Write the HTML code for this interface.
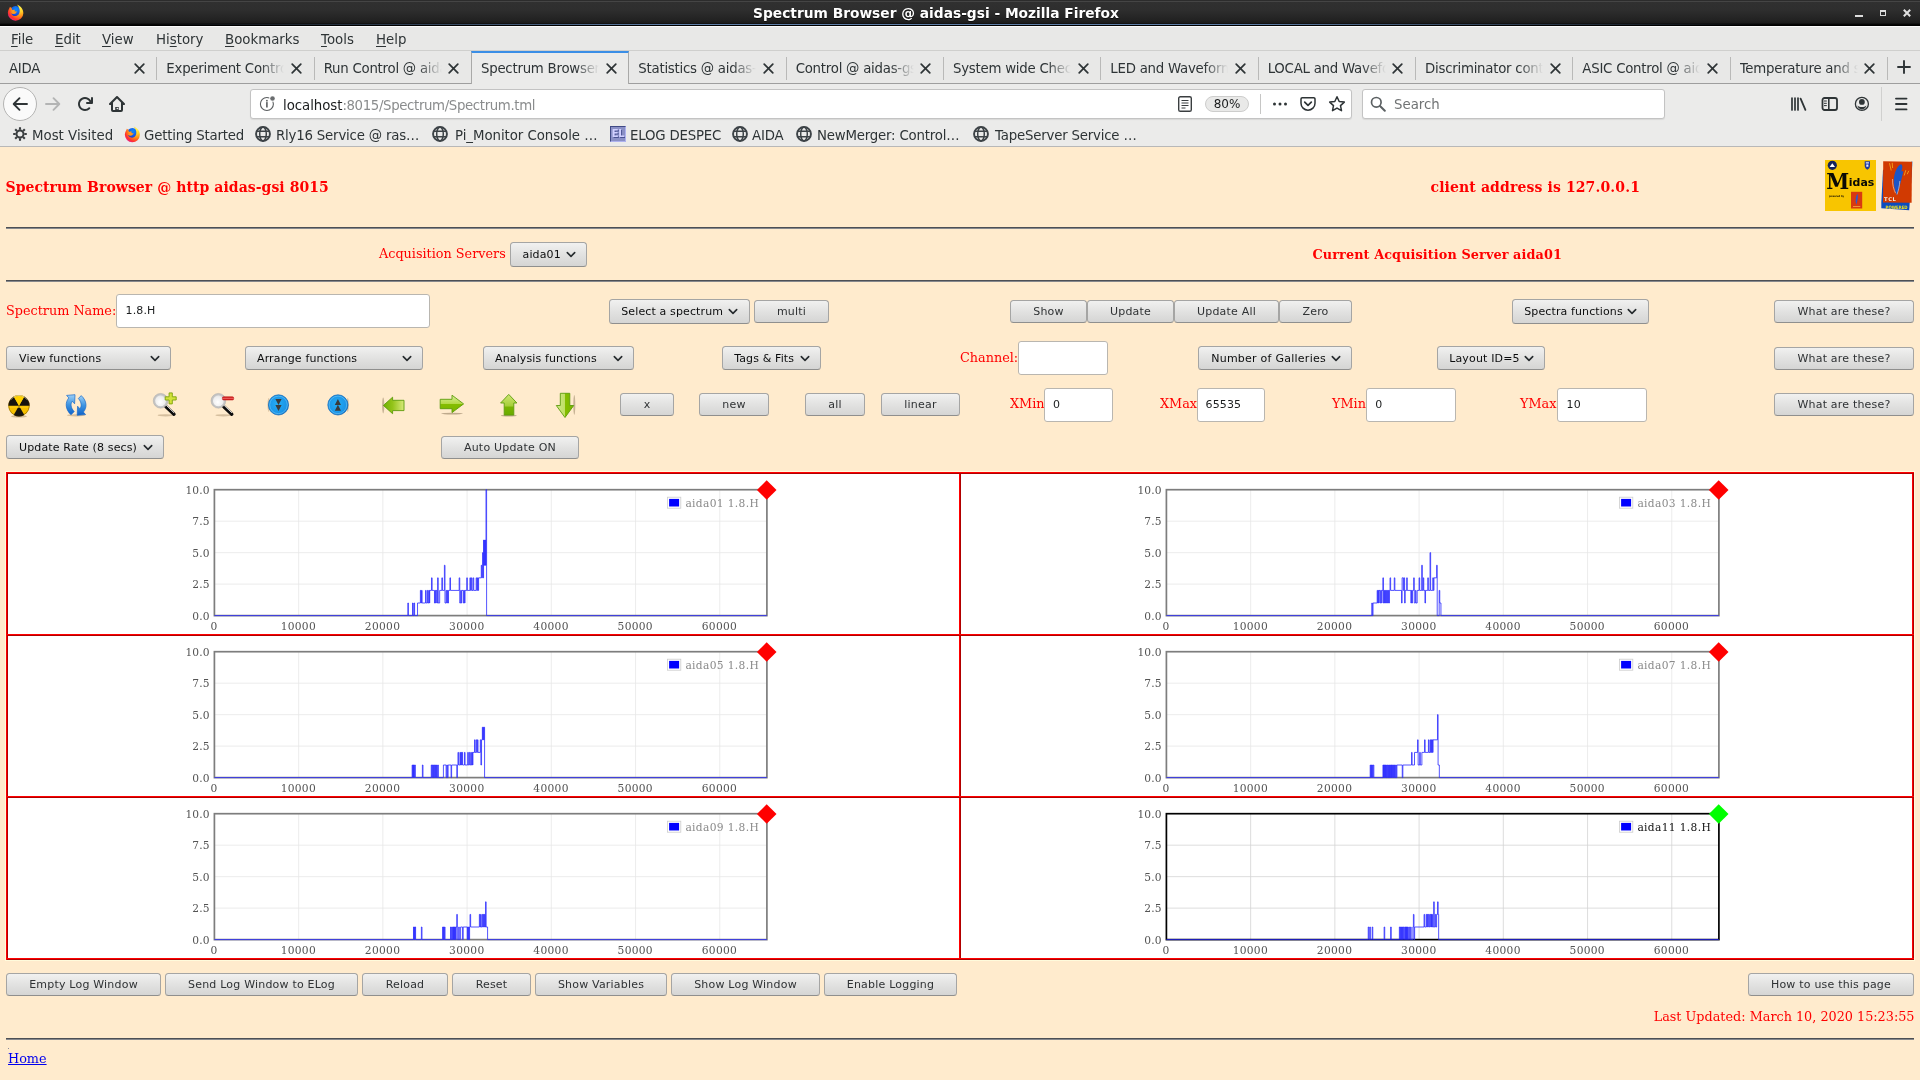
<!DOCTYPE html>
<html lang="en">
<head>
<meta charset="utf-8">
<title>Spectrum Browser @ aidas-gsi</title>
<style>
*{box-sizing:border-box;margin:0;padding:0}
html,body{width:1920px;height:1080px;overflow:hidden;background:#ffebcd}
body{position:relative;font-family:"DejaVu Sans","Liberation Sans",sans-serif;font-size:13.33px;color:#2e3436}
.abs{position:absolute}
/* ---------- window title bar ---------- */
#titlebar{left:0;top:0;width:1920px;height:26px;background:linear-gradient(#2c2c2c 0,#2c2c2c 1px,#454545 1px,#454545 2px,#303030 2px,#2e2e2e 10px,#222 20px,#1b1b1b 23px,#0a0a0a 24px,#000 25px,#000 26px)}
#titletext{left:0;top:0;width:1872px;height:26px;line-height:26px;text-align:center;color:#fff;font-weight:bold;font-size:13.770px;white-space:nowrap;text-shadow:0 1px 0 rgba(0,0,0,.6)}
/* ---------- menubar ---------- */
#menubar{left:0;top:26px;width:1920px;height:25px;background:#e8e8e7;border-top:1px solid #fbfbfb;border-bottom:1px solid #cfcfcd}
#menubar span{position:absolute;top:0;line-height:25px;white-space:nowrap}
#menubar u{text-decoration:underline;text-underline-offset:2px;text-decoration-thickness:1px}
/* ---------- tab bar ---------- */
#tabbar{left:0;top:51px;width:1920px;height:33px;background:#e8e8e7;border-bottom:1px solid #9e9e9e}
.tab{position:absolute;top:0;height:32px;width:158px;line-height:35.500px;letter-spacing:-.25px;margin-left:-1px;padding-left:9px;white-space:nowrap;overflow:hidden}
.tab .lbl{position:absolute;left:10px;top:0;width:118px;overflow:hidden;white-space:nowrap;-webkit-mask-image:linear-gradient(to right,#000 80%,transparent 100%);mask-image:linear-gradient(to right,#000 80%,transparent 100%)}
.tab .sep{position:absolute;left:0;top:6px;width:1px;height:23px;background:#b9b9b8}
.tab svg{position:absolute;left:134.500px;top:11.500px}
.tab.act{background:#ebebea;top:0;height:33px;border-left:1px solid #a9a9a8;border-right:1px solid #a9a9a8;border-top:2px solid #3a8ee6}
.tab.act .lbl{top:-2px;left:9px}
.tab.act svg{top:9.500px;left:133.500px}
/* ---------- nav bar ---------- */
#navbar{left:0;top:84px;width:1920px;height:38px;background:#ebebea}
#bookbar{left:0;top:122px;width:1920px;height:25px;background:#ebebea;border-bottom:1px solid #b8b8b8}
#bookbar span{position:absolute;top:0;line-height:27.500px;white-space:nowrap;letter-spacing:-.2px}
.field{position:absolute;background:#fff;border:1px solid #c3c3c3;border-radius:3px;box-shadow:0 1px 1px rgba(0,0,0,.08)}

/* ---------- page ---------- */
.lab{position:absolute;font-family:"DejaVu Serif","Liberation Serif",serif;font-size:12.8px;color:#ff0000;white-space:nowrap;line-height:16px}
.hd{position:absolute;font-family:"DejaVu Serif","Liberation Serif",serif;font-weight:bold;color:#ff0000;white-space:nowrap;line-height:18px;letter-spacing:.06px}
.hr{position:absolute;height:2px;background:#4d4f54;border-bottom:1px solid #86888c}
.btn{position:absolute;height:23px;border:1px solid #a5a5a4;border-bottom-color:#8f8f8e;border-radius:3.500px;background:linear-gradient(#f1f1f0,#e2e2e1 50%,#d5d5d4);font-size:11px;letter-spacing:.2px;color:#2f3234;text-align:center;line-height:21px;white-space:nowrap}
.sel{position:absolute;height:25px;border:1px solid #a5a5a4;border-bottom-color:#8f8f8e;border-radius:3.500px;background:linear-gradient(#f1f1f0,#e2e2e1 50%,#d5d5d4);font-size:11px;letter-spacing:.13px;color:#0c0d0e;line-height:23px;padding-left:11px;white-space:nowrap}
.sel svg{position:absolute;top:8px}
.inp{position:absolute;height:34px;background:#fff;border:1px solid #b9b6b0;border-radius:3px;font-size:11px;letter-spacing:.15px;color:#1b1d1e;line-height:32px;padding-left:8px;white-space:nowrap}
.grid{position:absolute;left:6px;top:472px;width:1908px;height:488px;background:#fff;border:2px solid #e00000}
.tk{font-family:"DejaVu Serif","Liberation Serif",serif;font-size:10.670px;fill:#545454}
</style>
</head>
<body>
<div id="root" style="position:absolute;left:0;top:0;width:1920px;height:1080px;will-change:transform">
<div id="titlebar" class="abs"></div>
<div class="abs" style="left:0;top:24px;width:1920px;height:1px;background:linear-gradient(to right,rgba(93,126,168,0) 0,rgba(93,126,168,0) 8%,#5f7fa8 35%,#5f7fa8 65%,rgba(93,126,168,0) 92%)"></div>
<svg class="abs" style="left:6.6px;top:4.4px" width="17" height="17" viewBox="0 0 16 16"><defs><radialGradient id="fg2" cx="0.780" cy="0.150" r="1.050"><stop offset="0" stop-color="#fff44f"/><stop offset="0.300" stop-color="#ffd02a"/><stop offset="0.550" stop-color="#ff8a16"/><stop offset="0.780" stop-color="#ff3030"/><stop offset="1" stop-color="#d71fc0"/></radialGradient><radialGradient id="fb2" cx="0.550" cy="0.300" r="0.750"><stop offset="0" stop-color="#0a8cff"/><stop offset="0.600" stop-color="#1a55e0"/><stop offset="1" stop-color="#2a14a8"/></radialGradient></defs><circle cx="8.100" cy="7.200" r="5.300" fill="url(#fb2)"/><path d="M2.800 2.700C2.300 4.200 1 5.600.8 8.300A7.300 7.300 0 0 0 15.400 8.600C15.400 5 13.200 2 9.400.4C10.400 2.200 11.700 3.400 11.900 5.600C12.200 9 10.400 11.300 7.800 11.300C5.600 11.300 4.300 10 4.100 8.600C5 9.200 6 9.300 6.900 8.900C5.600 8.300 5 7.200 5.300 6C4.600 5.400 4.200 4.400 4.400 3.600C3.800 3.500 3.200 3.200 2.800 2.700Z" fill="url(#fg2)"/><path d="M4.300 6.200C5.400 5.300 6.700 5.200 7.800 5.700C7.300 6 7 6.400 6.900 6.900C7.700 7.100 8.700 7.100 9.400 6.800C9.100 8.300 7.900 9.300 6.400 9.300C5.200 9.300 4.300 8.700 4 7.800C4.400 8 4.900 8 5.300 7.800C4.700 7.400 4.300 6.900 4.300 6.200Z" fill="#ff9a1f"/></svg>
<div class="abs" style="left:1855px;top:15px;width:8px;height:2px;background:#dcdcdc"></div>
<div class="abs" style="left:1880px;top:10px;width:6px;height:6px;border:1px solid #dcdcdc;border-top-width:2px"></div>
<svg class="abs" style="left:1903px;top:9px" width="8" height="8" viewBox="0 0 8 8"><path d="M.8 .8L7.200 7.200M7.200 .8L.8 7.200" stroke="#e0e0e0" stroke-width="2"/></svg>
<div id="titletext" class="abs">Spectrum Browser @ aidas-gsi - Mozilla Firefox</div>
<div id="menubar" class="abs">
<span style="left:11px"><u>F</u>ile</span>
<span style="left:55px"><u>E</u>dit</span>
<span style="left:102px"><u>V</u>iew</span>
<span style="left:156px">Hi<u>s</u>tory</span>
<span style="left:225px"><u>B</u>ookmarks</span>
<span style="left:321px"><u>T</u>ools</span>
<span style="left:376px"><u>H</u>elp</span>
</div>
<div id="tabbar" class="abs">
<div class="tab" style="left:0.0px"><span class="lbl">AIDA</span><svg width="11" height="11" viewBox="0 0 11 11"><path d="M1.200 1.200L9.800 9.800M9.800 1.200L1.200 9.800" stroke="#2e3436" stroke-width="1.700" fill="none" stroke-linecap="round"/></svg></div>
<div class="tab" style="left:157.33px"><i class="sep"></i><span class="lbl">Experiment Control @ aidas-gsi</span><svg width="11" height="11" viewBox="0 0 11 11"><path d="M1.200 1.200L9.800 9.800M9.800 1.200L1.200 9.800" stroke="#2e3436" stroke-width="1.700" fill="none" stroke-linecap="round"/></svg></div>
<div class="tab" style="left:314.67px"><i class="sep"></i><span class="lbl">Run Control @ aidas-gsi</span><svg width="11" height="11" viewBox="0 0 11 11"><path d="M1.200 1.200L9.800 9.800M9.800 1.200L1.200 9.800" stroke="#2e3436" stroke-width="1.700" fill="none" stroke-linecap="round"/></svg></div>
<div class="tab act" style="left:472.0px"><span class="lbl">Spectrum Browser @ aidas-gsi</span><svg width="11" height="11" viewBox="0 0 11 11"><path d="M1.200 1.200L9.800 9.800M9.800 1.200L1.200 9.800" stroke="#2e3436" stroke-width="1.700" fill="none" stroke-linecap="round"/></svg></div>
<div class="tab" style="left:629.33px"><span class="lbl">Statistics @ aidas-gsi</span><svg width="11" height="11" viewBox="0 0 11 11"><path d="M1.200 1.200L9.800 9.800M9.800 1.200L1.200 9.800" stroke="#2e3436" stroke-width="1.700" fill="none" stroke-linecap="round"/></svg></div>
<div class="tab" style="left:786.67px"><i class="sep"></i><span class="lbl">Control @ aidas-gsi</span><svg width="11" height="11" viewBox="0 0 11 11"><path d="M1.200 1.200L9.800 9.800M9.800 1.200L1.200 9.800" stroke="#2e3436" stroke-width="1.700" fill="none" stroke-linecap="round"/></svg></div>
<div class="tab" style="left:944.0px"><i class="sep"></i><span class="lbl">System wide Checks @ aidas-gsi</span><svg width="11" height="11" viewBox="0 0 11 11"><path d="M1.200 1.200L9.800 9.800M9.800 1.200L1.200 9.800" stroke="#2e3436" stroke-width="1.700" fill="none" stroke-linecap="round"/></svg></div>
<div class="tab" style="left:1101.33px"><i class="sep"></i><span class="lbl">LED and Waveform @ aidas-gsi</span><svg width="11" height="11" viewBox="0 0 11 11"><path d="M1.200 1.200L9.800 9.800M9.800 1.200L1.200 9.800" stroke="#2e3436" stroke-width="1.700" fill="none" stroke-linecap="round"/></svg></div>
<div class="tab" style="left:1258.67px"><i class="sep"></i><span class="lbl">LOCAL and Waveform @ aidas-gsi</span><svg width="11" height="11" viewBox="0 0 11 11"><path d="M1.200 1.200L9.800 9.800M9.800 1.200L1.200 9.800" stroke="#2e3436" stroke-width="1.700" fill="none" stroke-linecap="round"/></svg></div>
<div class="tab" style="left:1416.0px"><i class="sep"></i><span class="lbl">Discriminator control @ aidas-gsi</span><svg width="11" height="11" viewBox="0 0 11 11"><path d="M1.200 1.200L9.800 9.800M9.800 1.200L1.200 9.800" stroke="#2e3436" stroke-width="1.700" fill="none" stroke-linecap="round"/></svg></div>
<div class="tab" style="left:1573.33px"><i class="sep"></i><span class="lbl">ASIC Control @ aidas-gsi</span><svg width="11" height="11" viewBox="0 0 11 11"><path d="M1.200 1.200L9.800 9.800M9.800 1.200L1.200 9.800" stroke="#2e3436" stroke-width="1.700" fill="none" stroke-linecap="round"/></svg></div>
<div class="tab" style="left:1730.67px"><i class="sep"></i><span class="lbl">Temperature and status @ aidas-gsi</span><svg width="11" height="11" viewBox="0 0 11 11"><path d="M1.200 1.200L9.800 9.800M9.800 1.200L1.200 9.800" stroke="#2e3436" stroke-width="1.700" fill="none" stroke-linecap="round"/></svg></div>
<i class="sep" style="position:absolute;left:1887px;top:6px;width:1px;height:23px;background:#b9b9b8"></i><svg class="abs" style="left:1897px;top:9px" width="14" height="14" viewBox="0 0 14 14"><path d="M7 1V13M1 7H13" stroke="#2e3436" stroke-width="1.900" stroke-linecap="round"/></svg>
</div>
<div id="navbar" class="abs">
<div class="abs" style="left:3px;top:3px;width:34px;height:34px;border-radius:50%;background:#fafafa;border:1px solid #b4b4b3"></div>
<svg class="abs" style="left:12px;top:12px" width="16" height="16" viewBox="0 0 16 16"><path d="M15 8H2M7.5 2.2L1.7 8l5.8 5.8" stroke="#2e3436" stroke-width="1.9" fill="none" stroke-linecap="round" stroke-linejoin="round"/></svg>
<svg class="abs" style="left:45px;top:12px" width="16" height="16" viewBox="0 0 16 16"><path d="M1 8H14M8.5 2.2L14.3 8l-5.8 5.8" stroke="#b3b4b4" stroke-width="1.9" fill="none" stroke-linecap="round" stroke-linejoin="round"/></svg>
<svg class="abs" style="left:77px;top:12px" width="16" height="16" viewBox="0 0 16 16"><path d="M15 1a1 1 0 0 0-1 1v2.418A6.995 6.995 0 1 0 8 15a6.954 6.954 0 0 0 4.950-2.050 1 1 0 0 0-1.414-1.414A5.019 5.019 0 1 1 12.549 6H10a1 1 0 0 0 0 2h5a1 1 0 0 0 1-1V2a1 1 0 0 0-1-1z" fill="#2e3436"/></svg>
<svg class="abs" style="left:109px;top:12px" width="16" height="16" viewBox="0 0 16 16"><path d="M15.7 7.3l-7-7a1 1 0 0 0-1.4 0l-7 7A1 1 0 0 0 1 9h1v5a2 2 0 0 0 2 2h8a2 2 0 0 0 2-2V9h1a1 1 0 0 0 .7-1.700zM12 14H9.500v-3h-3v3H4V6.400l4-4 4 4z" fill="#2e3436"/><rect x="6.500" y="11" width="3" height="3" fill="#2e3436"/><rect x="7.600" y="11.800" width="1.600" height="1.400" fill="#ebebea"/></svg>
<div class="field" style="left:250px;top:5px;width:1102px;height:30px"></div>
<svg class="abs" style="left:258px;top:10px" width="20" height="20" viewBox="258 94 20 20"><circle cx="266.900" cy="104" r="6.500" fill="none" stroke="#5a5d5f" stroke-width="1.100"/><rect x="266.100" y="102.100" width="1.600" height="5.400" fill="#5a5d5f"/><rect x="266.100" y="99.900" width="1.600" height="1.600" fill="#5a5d5f"/><circle cx="272.500" cy="98.500" r="3.300" fill="#fff"/><circle cx="272.500" cy="98.500" r="2.300" fill="#6a6d6f"/></svg>
<span class="abs" style="left:283px;top:6px;line-height:31.500px;color:#8a8c8d;white-space:nowrap;letter-spacing:-.37px"><span style="color:#1a1c1d;letter-spacing:-.05px">localhost</span>:8015/Spectrum/Spectrum.tml</span>
<svg class="abs" style="left:1177px;top:12px" width="16" height="16" viewBox="0 0 16 16"><rect x="1.700" y="0.700" width="12.600" height="14.600" rx="1.600" fill="none" stroke="#3a3e40" stroke-width="1.400"/><path d="M4.500 4.500h7M4.500 7h7M4.500 9.500h7M4.500 12h4" stroke="#3a3e40" stroke-width="1"/></svg>
<div class="abs" style="left:1205px;top:12px;width:44px;height:16px;border-radius:8px;background:#e9e9e8;border:1px solid #cdcdcc;font-size:12px;line-height:14px;text-align:center;color:#1a1c1d">80%</div>
<div class="abs" style="left:1260px;top:10px;width:1px;height:20px;background:#c6c6c5"></div>
<svg class="abs" style="left:1272px;top:12px" width="16" height="16" viewBox="0 0 16 16"><circle cx="2.500" cy="8" r="1.500" fill="#2e3436"/><circle cx="8" cy="8" r="1.500" fill="#2e3436"/><circle cx="13.500" cy="8" r="1.500" fill="#2e3436"/></svg>
<svg class="abs" style="left:1300px;top:12px" width="16" height="16" viewBox="0 0 16 16"><path d="M2.200 1.700h11.600a1.200 1.200 0 0 1 1.200 1.200v4.300a7 7 0 0 1-14 0V2.900a1.200 1.200 0 0 1 1.200-1.200z" fill="none" stroke="#2e3436" stroke-width="1.500"/><path d="M4.700 6.200L8 9.300l3.300-3.100" fill="none" stroke="#2e3436" stroke-width="1.700" stroke-linecap="round" stroke-linejoin="round"/></svg>
<svg class="abs" style="left:1328px;top:11px" width="18" height="18" viewBox="0 0 18 18"><path d="M9 1.800l2.200 4.700 5.100.6-3.800 3.500 1 5.100L9 13.100l-4.500 2.600 1-5.100L1.700 7.100l5.100-.6z" fill="none" stroke="#2e3436" stroke-width="1.500" stroke-linejoin="round"/></svg>
<div class="field" style="left:1362px;top:5px;width:303px;height:30px"></div>
<svg class="abs" style="left:1370px;top:12px" width="16" height="16" viewBox="0 0 16 16"><circle cx="6.300" cy="6.300" r="4.800" fill="none" stroke="#5c6163" stroke-width="1.700"/><path d="M10 10l4.800 4.800" stroke="#5c6163" stroke-width="2" stroke-linecap="round"/></svg>
<span class="abs" style="left:1394px;top:6px;line-height:29px;color:#707374">Search</span>
<svg class="abs" style="left:1790px;top:12px" width="18" height="16" viewBox="0 0 18 16"><path d="M2 2v12M5 2v12M8 2v12" stroke="#2e3436" stroke-width="1.700" stroke-linecap="round"/><path d="M10.600 2.600L15.400 13.800" stroke="#2e3436" stroke-width="1.800" stroke-linecap="round"/></svg>
<svg class="abs" style="left:1821px;top:12px" width="18" height="16" viewBox="0 0 18 16"><rect x="1.500" y="2" width="14.500" height="12" rx="2" fill="none" stroke="#2e3436" stroke-width="1.800"/><path d="M7.800 2v12" stroke="#2e3436" stroke-width="1.600"/><path d="M3 5h2.800M3 7.300h2.800M3 9.600h2.800" stroke="#2e3436" stroke-width="1"/></svg>
<svg class="abs" style="left:1853px;top:11px" width="18" height="18" viewBox="0 0 18 18"><circle cx="8.900" cy="8.900" r="6.500" fill="none" stroke="#2e3436" stroke-width="1.300"/><circle cx="8.900" cy="6.900" r="2.900" fill="#2e3436"/><path d="M4.400 10.600c1.200 1.100 2.800 1.500 4.500 1.500s3.300-.4 4.500-1.500c-.3 2.200-2.200 3.900-4.500 3.900s-4.200-1.700-4.500-3.900z" fill="#2e3436"/></svg>
<div class="abs" style="left:1881px;top:3px;width:1px;height:34px;background:#d0d0cf"></div>
<svg class="abs" style="left:1894px;top:12px" width="16" height="16" viewBox="0 0 16 16"><path d="M2 2.600h10.500M2 8h10.500M2 13.400h10.500" stroke="#2e3436" stroke-width="1.900" stroke-linecap="round"/></svg>
</div>
<div id="bookbar" class="abs">
<svg class="abs" style="left:13px;top:5px" width="14" height="14" viewBox="0 0 14 14"><g stroke="#3a3e40" fill="none"><circle cx="7" cy="7" r="3.500" stroke-width="2"/><path d="M7 .2v2.500M7 11.300v2.500M.2 7h2.500M11.300 7h2.500M2.190 2.190l1.770 1.770M10.040 10.040l1.770 1.770M2.190 11.810l1.770-1.770M10.040 3.960l1.770-1.770" stroke-width="2.100"/></g></svg>
<span style="left:32px;letter-spacing:0">Most Visited</span>
<svg class="abs" style="left:124px;top:4px" width="16.5" height="16.5" viewBox="0 0 16 16"><defs><radialGradient id="fg1" cx="0.780" cy="0.150" r="1.050"><stop offset="0" stop-color="#fff44f"/><stop offset="0.300" stop-color="#ffd02a"/><stop offset="0.550" stop-color="#ff8a16"/><stop offset="0.780" stop-color="#ff3030"/><stop offset="1" stop-color="#d71fc0"/></radialGradient><radialGradient id="fb1" cx="0.550" cy="0.300" r="0.750"><stop offset="0" stop-color="#0a8cff"/><stop offset="0.600" stop-color="#1a55e0"/><stop offset="1" stop-color="#2a14a8"/></radialGradient></defs><circle cx="8.100" cy="7.200" r="5.300" fill="url(#fb1)"/><path d="M2.800 2.700C2.300 4.200 1 5.600.8 8.300A7.300 7.300 0 0 0 15.400 8.600C15.400 5 13.200 2 9.400.4C10.400 2.200 11.700 3.400 11.900 5.600C12.200 9 10.400 11.300 7.800 11.300C5.600 11.300 4.300 10 4.100 8.600C5 9.200 6 9.300 6.900 8.900C5.600 8.300 5 7.200 5.300 6C4.600 5.400 4.200 4.400 4.400 3.600C3.800 3.500 3.200 3.200 2.800 2.700Z" fill="url(#fg1)"/><path d="M4.300 6.200C5.400 5.300 6.700 5.200 7.800 5.700C7.300 6 7 6.400 6.900 6.900C7.700 7.100 8.700 7.100 9.400 6.800C9.100 8.300 7.900 9.300 6.400 9.300C5.200 9.300 4.300 8.700 4 7.800C4.400 8 4.900 8 5.300 7.800C4.700 7.400 4.300 6.900 4.300 6.200Z" fill="#ff9a1f"/></svg>
<span style="left:144px">Getting Started</span>
<svg class="abs" style="left:255px;top:4px" width="16" height="16" viewBox="0 0 16 16"><g fill="none" stroke="#3d4347"><circle cx="8" cy="8" r="6.950" stroke-width="1.900"/><ellipse cx="8" cy="8" rx="3.300" ry="6.900" stroke-width="1.500"/><path d="M1.800 5.300h12.400M1.800 10.700h12.400" stroke-width="1.500"/></g></svg>
<span style="left:276px">Rly16 Service @ ras…</span>
<svg class="abs" style="left:432px;top:4px" width="16" height="16" viewBox="0 0 16 16"><g fill="none" stroke="#3d4347"><circle cx="8" cy="8" r="6.950" stroke-width="1.900"/><ellipse cx="8" cy="8" rx="3.300" ry="6.900" stroke-width="1.500"/><path d="M1.800 5.300h12.400M1.800 10.700h12.400" stroke-width="1.500"/></g></svg>
<span style="left:455px;letter-spacing:-.05px">Pi_Monitor Console …</span>
<div class="abs" style="left:610px;top:4px;width:16px;height:16px;background:#8a90c6;border:1px solid #aeb2ee;border-top-color:#404a85;border-left-color:#404a85;color:#d0d0ff;font-size:10px;font-weight:bold;line-height:13px;text-align:center;letter-spacing:-.3px;text-shadow:1px 1px 0 #4a5292;overflow:hidden">EL</div>
<span style="left:630px">ELOG DESPEC</span>
<svg class="abs" style="left:732px;top:4px" width="16" height="16" viewBox="0 0 16 16"><g fill="none" stroke="#3d4347"><circle cx="8" cy="8" r="6.950" stroke-width="1.900"/><ellipse cx="8" cy="8" rx="3.300" ry="6.900" stroke-width="1.500"/><path d="M1.800 5.300h12.400M1.800 10.700h12.400" stroke-width="1.500"/></g></svg>
<span style="left:752px">AIDA</span>
<svg class="abs" style="left:796px;top:4px" width="16" height="16" viewBox="0 0 16 16"><g fill="none" stroke="#3d4347"><circle cx="8" cy="8" r="6.950" stroke-width="1.900"/><ellipse cx="8" cy="8" rx="3.300" ry="6.900" stroke-width="1.500"/><path d="M1.800 5.300h12.400M1.800 10.700h12.400" stroke-width="1.500"/></g></svg>
<span style="left:817px">NewMerger: Control…</span>
<svg class="abs" style="left:973px;top:4px" width="16" height="16" viewBox="0 0 16 16"><g fill="none" stroke="#3d4347"><circle cx="8" cy="8" r="6.950" stroke-width="1.900"/><ellipse cx="8" cy="8" rx="3.300" ry="6.900" stroke-width="1.500"/><path d="M1.800 5.300h12.400M1.800 10.700h12.400" stroke-width="1.500"/></g></svg>
<span style="left:995px">TapeServer Service …</span>
</div>
<div id="page" class="abs" style="left:0;top:0;width:1920px;height:1080px">
<div class="hd" style="left:5.5px;top:178px;font-size:14px">Spectrum Browser @ http aidas-gsi 8015</div>
<div class="hd" style="left:1430.5px;top:178px;font-size:14px;letter-spacing:0.12px">client address is 127.0.0.1</div>
<div class="hr" style="left:6px;top:227px;width:1908px"></div>
<div class="lab" style="left:379px;top:246px;">Acquisition Servers</div>
<div class="sel" style="left:510px;top:242px;width:77px;padding-left:11.5px;letter-spacing:0.15px;">aida01<svg style="left:54.5px" width="10" height="8" viewBox="0 0 10 8"><path d="M1.300 1.600L5 5.400L8.700 1.600" fill="none" stroke="#262b2e" stroke-width="1.600" stroke-linecap="round" stroke-linejoin="round"/></svg></div>
<div class="hd" style="left:1312.5px;top:245.5px;font-size:12.8px;letter-spacing:0.11px">Current Acquisition Server aida01</div>
<div class="hr" style="left:6px;top:280px;width:1908px"></div>
<div class="lab" style="left:6px;top:303px;">Spectrum Name:</div>
<div class="inp" style="left:116px;top:294px;width:314px;padding-left:8.5px;">1.8.H</div>
<div class="sel" style="left:609px;top:299px;width:141px;padding-left:11.200000000000045px;">Select a spectrum<svg style="left:118px" width="10" height="8" viewBox="0 0 10 8"><path d="M1.300 1.600L5 5.400L8.700 1.600" fill="none" stroke="#262b2e" stroke-width="1.600" stroke-linecap="round" stroke-linejoin="round"/></svg></div>
<div class="btn" style="left:754px;top:300px;width:75px">multi</div>
<div class="btn" style="left:1010px;top:300px;width:77px">Show</div>
<div class="btn" style="left:1087px;top:300px;width:87px">Update</div>
<div class="btn" style="left:1174px;top:300px;width:105px">Update All</div>
<div class="btn" style="left:1279px;top:300px;width:73px">Zero</div>
<div class="sel" style="left:1512px;top:299px;width:137px;padding-left:11.200000000000045px;letter-spacing:0.12px;">Spectra functions<svg style="left:114px" width="10" height="8" viewBox="0 0 10 8"><path d="M1.300 1.600L5 5.400L8.700 1.600" fill="none" stroke="#262b2e" stroke-width="1.600" stroke-linecap="round" stroke-linejoin="round"/></svg></div>
<div class="btn" style="left:1774px;top:300px;width:140px">What are these?</div>
<div class="sel" style="left:6px;top:346px;width:165px;padding-left:12px;height:24px;line-height:23.5px;letter-spacing:0.15px;">View functions<svg style="left:143px" width="10" height="8" viewBox="0 0 10 8"><path d="M1.300 1.600L5 5.400L8.700 1.600" fill="none" stroke="#262b2e" stroke-width="1.600" stroke-linecap="round" stroke-linejoin="round"/></svg></div>
<div class="sel" style="left:245px;top:346px;width:178px;padding-left:11px;height:24px;line-height:23.5px;">Arrange functions<svg style="left:155.7px" width="10" height="8" viewBox="0 0 10 8"><path d="M1.300 1.600L5 5.400L8.700 1.600" fill="none" stroke="#262b2e" stroke-width="1.600" stroke-linecap="round" stroke-linejoin="round"/></svg></div>
<div class="sel" style="left:483px;top:346px;width:151px;padding-left:11px;height:24px;line-height:23.5px;">Analysis functions<svg style="left:129px" width="10" height="8" viewBox="0 0 10 8"><path d="M1.300 1.600L5 5.400L8.700 1.600" fill="none" stroke="#262b2e" stroke-width="1.600" stroke-linecap="round" stroke-linejoin="round"/></svg></div>
<div class="sel" style="left:722px;top:346px;width:99px;padding-left:11.200000000000045px;height:24px;line-height:23.5px;">Tags &amp; Fits<svg style="left:77px" width="10" height="8" viewBox="0 0 10 8"><path d="M1.300 1.600L5 5.400L8.700 1.600" fill="none" stroke="#262b2e" stroke-width="1.600" stroke-linecap="round" stroke-linejoin="round"/></svg></div>
<div class="lab" style="left:960px;top:350px;">Channel:</div>
<div class="inp" style="left:1018px;top:341px;width:90px;"></div>
<div class="sel" style="left:1198px;top:346px;width:154px;padding-left:12.200000000000045px;height:24px;line-height:23.5px;letter-spacing:0.25px;">Number of Galleries<svg style="left:132px" width="10" height="8" viewBox="0 0 10 8"><path d="M1.300 1.600L5 5.400L8.700 1.600" fill="none" stroke="#262b2e" stroke-width="1.600" stroke-linecap="round" stroke-linejoin="round"/></svg></div>
<div class="sel" style="left:1437px;top:346px;width:108px;padding-left:11.200000000000045px;height:24px;line-height:23.5px;letter-spacing:0.15px;">Layout ID=5<svg style="left:86px" width="10" height="8" viewBox="0 0 10 8"><path d="M1.300 1.600L5 5.400L8.700 1.600" fill="none" stroke="#262b2e" stroke-width="1.600" stroke-linecap="round" stroke-linejoin="round"/></svg></div>
<div class="btn" style="left:1774px;top:347px;width:140px">What are these?</div>
<div class="btn" style="left:620px;top:393px;width:54px">x</div>
<div class="btn" style="left:699px;top:393px;width:70px">new</div>
<div class="btn" style="left:805px;top:393px;width:60px">all</div>
<div class="btn" style="left:881px;top:393px;width:79px">linear</div>
<div class="lab" style="left:1010px;top:396px;">XMin</div>
<div class="inp" style="left:1044px;top:388px;width:69px;padding-left:8px;">0</div>
<div class="lab" style="left:1160px;top:396px;">XMax</div>
<div class="inp" style="left:1197px;top:388px;width:68px;padding-left:7.5px;">65535</div>
<div class="lab" style="left:1332px;top:396px;">YMin</div>
<div class="inp" style="left:1366px;top:388px;width:90px;padding-left:8.200000000000045px;">0</div>
<div class="lab" style="left:1520px;top:396px;">YMax</div>
<div class="inp" style="left:1557px;top:388px;width:90px;padding-left:8.5px;">10</div>
<div class="btn" style="left:1774px;top:393px;width:140px">What are these?</div>
<div class="sel" style="left:6px;top:435px;width:158px;padding-left:12px;height:24px;line-height:23.5px;">Update Rate (8 secs)<svg style="left:136px" width="10" height="8" viewBox="0 0 10 8"><path d="M1.300 1.600L5 5.400L8.700 1.600" fill="none" stroke="#262b2e" stroke-width="1.600" stroke-linecap="round" stroke-linejoin="round"/></svg></div>
<div class="btn" style="left:441px;top:436px;width:138px">Auto Update ON</div>
<div class="btn" style="left:6px;top:973px;width:155px">Empty Log Window</div>
<div class="btn" style="left:165px;top:973px;width:193px">Send Log Window to ELog</div>
<div class="btn" style="left:362px;top:973px;width:86px">Reload</div>
<div class="btn" style="left:452px;top:973px;width:79px">Reset</div>
<div class="btn" style="left:535px;top:973px;width:132px">Show Variables</div>
<div class="btn" style="left:671px;top:973px;width:149px">Show Log Window</div>
<div class="btn" style="left:824px;top:973px;width:133px">Enable Logging</div>
<div class="btn" style="left:1748px;top:973px;width:166px">How to use this page</div>
<div class="lab" style="right:5.500px;top:1009px">Last Updated: March 10, 2020 15:23:55</div>
<div class="hr" style="left:6px;top:1038px;width:1908px"></div>
<div class="abs" style="left:8px;top:1048px;width:1px;height:1px;background:#8a8a9a"></div>
<div class="lab" style="left:8px;top:1050.500px;color:#0000ee;text-decoration:underline">Home</div>
<div class="abs" style="left:5px;top:471px;width:1910px;height:490px;border:1px solid #fffbdc;background:#fff"></div>
<div class="abs" style="left:6px;top:472px;width:1px;height:488px;background:#ff0000"></div><div class="abs" style="left:7px;top:472px;width:1px;height:488px;background:#b00000"></div>
<div class="abs" style="left:959px;top:472px;width:1px;height:488px;background:#ff0000"></div><div class="abs" style="left:960px;top:472px;width:1px;height:488px;background:#b00000"></div>
<div class="abs" style="left:1912px;top:472px;width:1px;height:488px;background:#ff0000"></div><div class="abs" style="left:1913px;top:472px;width:1px;height:488px;background:#b00000"></div>
<div class="abs" style="left:6px;top:472px;width:1908px;height:1px;background:#ff0000"></div><div class="abs" style="left:7px;top:473px;width:1907px;height:1px;background:#b00000"></div>
<div class="abs" style="left:6px;top:634px;width:1908px;height:1px;background:#ff0000"></div><div class="abs" style="left:7px;top:635px;width:1907px;height:1px;background:#b00000"></div>
<div class="abs" style="left:6px;top:796px;width:1908px;height:1px;background:#ff0000"></div><div class="abs" style="left:7px;top:797px;width:1907px;height:1px;background:#b00000"></div>
<div class="abs" style="left:6px;top:958px;width:1908px;height:1px;background:#ff0000"></div><div class="abs" style="left:7px;top:959px;width:1907px;height:1px;background:#b00000"></div>
<svg class="abs" style="left:0;top:472px" width="1920" height="490" viewBox="0 472 1920 490">
<path d="M298.63 489.7V615.6M382.86 489.7V615.6M467.09 489.7V615.6M551.32 489.7V615.6M635.55 489.7V615.6M719.78 489.7V615.6M214.4 584.12H766.9M214.4 552.65H766.9M214.4 521.17H766.9" stroke="#e7e7e7" stroke-width="0.800" fill="none"/>
<rect x="214.4" y="489.7" width="552.5" height="125.90000000000003" fill="none" stroke="#7d7d7d" stroke-width="1.700"/>
<path d="M214.40 615.60H407.83V603.01H408.42V615.60H412.52V603.01H413.11V615.60H414.00V603.01H414.59V615.60H417.52V603.01H420.38V590.42H420.97V603.01H421.52V590.42H422.11V603.01H425.54V590.42H426.13V603.01H427.42V590.42H428.01V603.01H428.77V590.42H429.36V603.01H429.73V590.42H431.52V577.83H432.11V590.42H434.47V603.01H435.06V590.42H435.61V603.01H436.20V590.42H436.98V603.01H437.62V577.83H438.21V603.01H439.66V590.42H441.85V577.83H442.44V590.42H444.40V565.24H444.99V603.01H446.11V590.42H446.75V603.01H447.34V590.42H447.89V603.01H448.48V590.42H449.91V577.83H450.50V590.42H459.17V577.83H459.76V603.01H460.74V590.42H461.11V603.01H461.70V590.42H463.33V603.01H463.92V590.42H464.47V603.01H465.06V590.42H466.75V577.83H467.34V590.42H469.91V577.83H470.50V590.42H471.38V577.83H471.97V590.42H473.13V577.83H473.72V590.42H476.15V577.83H476.74V590.42H477.52V577.83H478.05V590.42H478.59V577.83H481.28V565.24H481.81V577.83H482.35V565.24H482.62V552.65H483.02V577.83H483.56V540.06H483.96V565.24H484.36V540.06H484.77V565.24H485.17V540.06H485.57V565.24H486.01V489.70H486.60V615.60H766.90" stroke="#2a2aff" stroke-width="0.800" fill="none" stroke-linejoin="miter"/>
<text class="tk" x="209.6" y="619.60" text-anchor="end" style="letter-spacing:.1px">0.0</text>
<text class="tk" x="209.6" y="588.12" text-anchor="end" style="letter-spacing:.1px">2.5</text>
<text class="tk" x="209.6" y="556.65" text-anchor="end" style="letter-spacing:.1px">5.0</text>
<text class="tk" x="209.6" y="525.17" text-anchor="end" style="letter-spacing:.1px">7.5</text>
<text class="tk" x="209.6" y="493.70" text-anchor="end" style="letter-spacing:.1px">10.0</text>
<text class="tk" x="214.10" y="629.90" text-anchor="middle" style="letter-spacing:.3px">0</text>
<text class="tk" x="298.33" y="629.90" text-anchor="middle" style="letter-spacing:.3px">10000</text>
<text class="tk" x="382.56" y="629.90" text-anchor="middle" style="letter-spacing:.3px">20000</text>
<text class="tk" x="466.79" y="629.90" text-anchor="middle" style="letter-spacing:.3px">30000</text>
<text class="tk" x="551.02" y="629.90" text-anchor="middle" style="letter-spacing:.3px">40000</text>
<text class="tk" x="635.25" y="629.90" text-anchor="middle" style="letter-spacing:.3px">50000</text>
<text class="tk" x="719.48" y="629.90" text-anchor="middle" style="letter-spacing:.3px">60000</text>
<rect x="667.4" y="497.2" width="13.400" height="11" fill="#fff" stroke="#ccc" stroke-width="0.800"/>
<rect x="669.1" y="498.9" width="10" height="7.600" fill="#0000ff"/>
<text x="685.4" y="506.8" style="font-family:'DejaVu Serif','Liberation Serif',serif;font-size:10.670px;letter-spacing:.35px" fill="#8a8a8a">aida01 1.8.H</text>
<path d="M766.6999999999999 480.2L776.4999999999999 490.0L766.6999999999999 499.8L756.9 490.0Z" fill="#ff0000"/>
<path d="M1250.63 489.7V615.6M1334.86 489.7V615.6M1419.09 489.7V615.6M1503.32 489.7V615.6M1587.55 489.7V615.6M1671.78 489.7V615.6M1166.4 584.12H1718.9M1166.4 552.65H1718.9M1166.4 521.17H1718.9" stroke="#e7e7e7" stroke-width="0.800" fill="none"/>
<rect x="1166.4" y="489.7" width="552.5" height="125.90000000000003" fill="none" stroke="#7d7d7d" stroke-width="1.700"/>
<path d="M1166.40 615.60H1371.79V603.01H1372.38V615.60H1373.02V603.01H1377.18V590.42H1377.72V603.01H1378.12V590.42H1378.66V603.01H1379.06V590.42H1380.04V603.01H1380.63V590.42H1381.61V603.01H1382.01V590.42H1382.86V577.83H1383.45V603.01H1384.03V590.42H1384.56V603.01H1385.10V590.42H1385.64V603.01H1386.17V590.42H1386.71V603.01H1387.25V590.42H1387.79V603.01H1388.36V590.42H1388.95V603.01H1389.40V590.42H1390.04V577.83H1390.63V590.42H1394.27V577.83H1394.86V590.42H1401.52V603.01H1402.11V577.83H1403.33V590.42H1403.92V577.83H1404.60V603.01H1405.19V590.42H1406.68V577.83H1407.28V590.42H1410.87V603.01H1411.41V590.42H1411.85V603.01H1412.44V590.42H1413.66V577.83H1414.26V603.01H1415.41V590.42H1416.00V603.01H1417.18V590.42H1419.10V577.83H1419.69V590.42H1421.72V565.24H1422.31V590.42H1423.22V577.83H1423.76V590.42H1424.94V603.01H1425.53V590.42H1427.76V577.83H1428.35V590.42H1430.04V552.65H1430.63V590.42H1432.79V577.83H1433.38V590.42H1433.96V577.83H1436.62V565.24H1437.21V615.60H1439.17V590.42H1439.76V603.01H1440.94V615.60H1718.90" stroke="#2a2aff" stroke-width="0.800" fill="none" stroke-linejoin="miter"/>
<text class="tk" x="1161.6000000000001" y="619.60" text-anchor="end" style="letter-spacing:.1px">0.0</text>
<text class="tk" x="1161.6000000000001" y="588.12" text-anchor="end" style="letter-spacing:.1px">2.5</text>
<text class="tk" x="1161.6000000000001" y="556.65" text-anchor="end" style="letter-spacing:.1px">5.0</text>
<text class="tk" x="1161.6000000000001" y="525.17" text-anchor="end" style="letter-spacing:.1px">7.5</text>
<text class="tk" x="1161.6000000000001" y="493.70" text-anchor="end" style="letter-spacing:.1px">10.0</text>
<text class="tk" x="1166.10" y="629.90" text-anchor="middle" style="letter-spacing:.3px">0</text>
<text class="tk" x="1250.33" y="629.90" text-anchor="middle" style="letter-spacing:.3px">10000</text>
<text class="tk" x="1334.56" y="629.90" text-anchor="middle" style="letter-spacing:.3px">20000</text>
<text class="tk" x="1418.79" y="629.90" text-anchor="middle" style="letter-spacing:.3px">30000</text>
<text class="tk" x="1503.02" y="629.90" text-anchor="middle" style="letter-spacing:.3px">40000</text>
<text class="tk" x="1587.25" y="629.90" text-anchor="middle" style="letter-spacing:.3px">50000</text>
<text class="tk" x="1671.48" y="629.90" text-anchor="middle" style="letter-spacing:.3px">60000</text>
<rect x="1619.4" y="497.2" width="13.400" height="11" fill="#fff" stroke="#ccc" stroke-width="0.800"/>
<rect x="1621.1000000000001" y="498.9" width="10" height="7.600" fill="#0000ff"/>
<text x="1637.4" y="506.8" style="font-family:'DejaVu Serif','Liberation Serif',serif;font-size:10.670px;letter-spacing:.35px" fill="#8a8a8a">aida03 1.8.H</text>
<path d="M1718.7 480.2L1728.5 490.0L1718.7 499.8L1708.9 490.0Z" fill="#ff0000"/>
<path d="M298.63 651.7V777.6M382.86 651.7V777.6M467.09 651.7V777.6M551.32 651.7V777.6M635.55 651.7V777.6M719.78 651.7V777.6M214.4 746.12H766.9M214.4 714.65H766.9M214.4 683.18H766.9" stroke="#e7e7e7" stroke-width="0.800" fill="none"/>
<rect x="214.4" y="651.7" width="552.5" height="125.89999999999998" fill="none" stroke="#7d7d7d" stroke-width="1.700"/>
<path d="M214.40 777.60H412.15V765.01H412.68V777.60H412.95V765.01H413.49V777.60H413.76V765.01H414.30V777.60H414.74V765.01H415.33V777.60H422.39V765.01H422.98V777.60H431.25V765.01H431.84V777.60H432.32V765.01H432.91V777.60H433.36V765.01H433.89V777.60H434.40V765.01H434.99V777.60H435.48V765.01H436.07V777.60H436.55V765.01H437.14V777.60H437.76V765.01H438.35V777.60H443.42V765.01H446.11V777.60H446.82V765.01H447.41V777.60H448.12V765.01H451.07V777.60H451.61V765.01H456.82V777.60H457.41V765.01H457.96V752.42H458.55V765.01H459.91V752.42H460.50V765.01H461.05V752.42H461.64V765.01H461.99V752.42H462.58V765.01H464.47V752.42H465.06V765.01H467.69V752.42H468.28V765.01H469.17V752.42H469.76V765.01H470.71V752.42H471.30V765.01H471.92V752.42H472.51V765.01H472.95V752.42H474.54V739.83H475.13V752.42H476.28V739.83H476.87V752.42H477.42V739.83H478.01V752.42H480.31V739.83H480.90V765.01H481.54V739.83H482.35V727.24H482.89V739.83H483.15V727.24H483.69V739.83H484.00V727.24H484.59V777.60H766.90" stroke="#2a2aff" stroke-width="0.800" fill="none" stroke-linejoin="miter"/>
<text class="tk" x="209.6" y="781.60" text-anchor="end" style="letter-spacing:.1px">0.0</text>
<text class="tk" x="209.6" y="750.12" text-anchor="end" style="letter-spacing:.1px">2.5</text>
<text class="tk" x="209.6" y="718.65" text-anchor="end" style="letter-spacing:.1px">5.0</text>
<text class="tk" x="209.6" y="687.18" text-anchor="end" style="letter-spacing:.1px">7.5</text>
<text class="tk" x="209.6" y="655.70" text-anchor="end" style="letter-spacing:.1px">10.0</text>
<text class="tk" x="214.10" y="791.90" text-anchor="middle" style="letter-spacing:.3px">0</text>
<text class="tk" x="298.33" y="791.90" text-anchor="middle" style="letter-spacing:.3px">10000</text>
<text class="tk" x="382.56" y="791.90" text-anchor="middle" style="letter-spacing:.3px">20000</text>
<text class="tk" x="466.79" y="791.90" text-anchor="middle" style="letter-spacing:.3px">30000</text>
<text class="tk" x="551.02" y="791.90" text-anchor="middle" style="letter-spacing:.3px">40000</text>
<text class="tk" x="635.25" y="791.90" text-anchor="middle" style="letter-spacing:.3px">50000</text>
<text class="tk" x="719.48" y="791.90" text-anchor="middle" style="letter-spacing:.3px">60000</text>
<rect x="667.4" y="659.2" width="13.400" height="11" fill="#fff" stroke="#ccc" stroke-width="0.800"/>
<rect x="669.1" y="660.9000000000001" width="10" height="7.600" fill="#0000ff"/>
<text x="685.4" y="668.8000000000001" style="font-family:'DejaVu Serif','Liberation Serif',serif;font-size:10.670px;letter-spacing:.35px" fill="#8a8a8a">aida05 1.8.H</text>
<path d="M766.6999999999999 642.2L776.4999999999999 652.0L766.6999999999999 661.8L756.9 652.0Z" fill="#ff0000"/>
<path d="M1250.63 651.7V777.6M1334.86 651.7V777.6M1419.09 651.7V777.6M1503.32 651.7V777.6M1587.55 651.7V777.6M1671.78 651.7V777.6M1166.4 746.12H1718.9M1166.4 714.65H1718.9M1166.4 683.18H1718.9" stroke="#e7e7e7" stroke-width="0.800" fill="none"/>
<rect x="1166.4" y="651.7" width="552.5" height="125.89999999999998" fill="none" stroke="#7d7d7d" stroke-width="1.700"/>
<path d="M1166.40 777.60H1370.20V765.01H1370.74V777.60H1371.05V765.01H1371.64V777.60H1371.95V765.01H1372.48V777.60H1373.26V765.01H1373.85V777.60H1382.95V765.01H1383.49V777.60H1383.76V765.01H1384.30V777.60H1384.60V765.01H1385.19V777.60H1385.50V765.01H1386.04V777.60H1386.58V765.01H1386.98V777.60H1387.42V765.01H1388.01V777.60H1388.59V765.01H1388.99V777.60H1389.26V765.01H1389.80V777.60H1390.07V765.01H1390.60V777.60H1391.01V765.01H1391.54V777.60H1391.81V765.01H1392.35V777.60H1392.75V765.01H1393.29V777.60H1393.69V765.01H1394.23V777.60H1394.60V765.01H1395.19V777.60H1395.74V765.01H1396.34V777.60H1396.91V765.01H1402.26V777.60H1402.85V765.01H1411.52V752.42H1412.11V765.01H1414.50V752.42H1417.56V739.83H1418.15V765.01H1419.70V752.42H1420.30V765.01H1421.88V752.42H1424.54V739.83H1425.13V752.42H1428.43V739.83H1429.02V752.42H1430.20V739.83H1430.74V752.42H1431.14V739.83H1431.68V752.42H1432.08V739.83H1432.62V752.42H1433.02V739.83H1437.49V714.65H1438.08V765.01H1439.33V777.60H1718.90" stroke="#2a2aff" stroke-width="0.800" fill="none" stroke-linejoin="miter"/>
<text class="tk" x="1161.6000000000001" y="781.60" text-anchor="end" style="letter-spacing:.1px">0.0</text>
<text class="tk" x="1161.6000000000001" y="750.12" text-anchor="end" style="letter-spacing:.1px">2.5</text>
<text class="tk" x="1161.6000000000001" y="718.65" text-anchor="end" style="letter-spacing:.1px">5.0</text>
<text class="tk" x="1161.6000000000001" y="687.18" text-anchor="end" style="letter-spacing:.1px">7.5</text>
<text class="tk" x="1161.6000000000001" y="655.70" text-anchor="end" style="letter-spacing:.1px">10.0</text>
<text class="tk" x="1166.10" y="791.90" text-anchor="middle" style="letter-spacing:.3px">0</text>
<text class="tk" x="1250.33" y="791.90" text-anchor="middle" style="letter-spacing:.3px">10000</text>
<text class="tk" x="1334.56" y="791.90" text-anchor="middle" style="letter-spacing:.3px">20000</text>
<text class="tk" x="1418.79" y="791.90" text-anchor="middle" style="letter-spacing:.3px">30000</text>
<text class="tk" x="1503.02" y="791.90" text-anchor="middle" style="letter-spacing:.3px">40000</text>
<text class="tk" x="1587.25" y="791.90" text-anchor="middle" style="letter-spacing:.3px">50000</text>
<text class="tk" x="1671.48" y="791.90" text-anchor="middle" style="letter-spacing:.3px">60000</text>
<rect x="1619.4" y="659.2" width="13.400" height="11" fill="#fff" stroke="#ccc" stroke-width="0.800"/>
<rect x="1621.1000000000001" y="660.9000000000001" width="10" height="7.600" fill="#0000ff"/>
<text x="1637.4" y="668.8000000000001" style="font-family:'DejaVu Serif','Liberation Serif',serif;font-size:10.670px;letter-spacing:.35px" fill="#8a8a8a">aida07 1.8.H</text>
<path d="M1718.7 642.2L1728.5 652.0L1718.7 661.8L1708.9 652.0Z" fill="#ff0000"/>
<path d="M298.63 813.7V939.6M382.86 813.7V939.6M467.09 813.7V939.6M551.32 813.7V939.6M635.55 813.7V939.6M719.78 813.7V939.6M214.4 908.12H766.9M214.4 876.65H766.9M214.4 845.18H766.9" stroke="#e7e7e7" stroke-width="0.800" fill="none"/>
<rect x="214.4" y="813.7" width="552.5" height="125.89999999999998" fill="none" stroke="#7d7d7d" stroke-width="1.700"/>
<path d="M214.40 939.60H413.49V927.01H414.03V939.60H414.30V927.01H414.83V939.60H415.01V927.01H415.60V939.60H421.38V927.01H421.97V939.60H442.62V927.01H443.15V939.60H443.42V927.01H443.96V939.60H444.47V927.01H445.06V939.60H450.51V927.01H451.10V939.60H451.72V927.01H452.31V939.60H452.82V927.01H453.36V939.60H453.62V927.01H454.16V939.60H454.43V927.01H454.97V939.60H455.23V927.01H455.77V939.60H456.04V927.01H456.75V914.42H457.34V939.60H458.70V927.01H459.29V939.60H460.60V927.01H462.59V939.60H463.18V927.01H467.18V939.60H467.58V927.01H468.12V939.60H468.56V927.01H469.15V939.60H469.60V927.01H470.04V914.42H470.63V927.01H479.37V914.42H479.96V927.01H480.58V914.42H481.17V927.01H482.19V914.42H482.78V927.01H483.33V914.42H483.92V927.01H484.40V914.42H484.99V927.01H485.54V901.83H486.13V927.01H487.58V939.60H766.90" stroke="#2a2aff" stroke-width="0.800" fill="none" stroke-linejoin="miter"/>
<text class="tk" x="209.6" y="943.60" text-anchor="end" style="letter-spacing:.1px">0.0</text>
<text class="tk" x="209.6" y="912.12" text-anchor="end" style="letter-spacing:.1px">2.5</text>
<text class="tk" x="209.6" y="880.65" text-anchor="end" style="letter-spacing:.1px">5.0</text>
<text class="tk" x="209.6" y="849.18" text-anchor="end" style="letter-spacing:.1px">7.5</text>
<text class="tk" x="209.6" y="817.70" text-anchor="end" style="letter-spacing:.1px">10.0</text>
<text class="tk" x="214.10" y="953.90" text-anchor="middle" style="letter-spacing:.3px">0</text>
<text class="tk" x="298.33" y="953.90" text-anchor="middle" style="letter-spacing:.3px">10000</text>
<text class="tk" x="382.56" y="953.90" text-anchor="middle" style="letter-spacing:.3px">20000</text>
<text class="tk" x="466.79" y="953.90" text-anchor="middle" style="letter-spacing:.3px">30000</text>
<text class="tk" x="551.02" y="953.90" text-anchor="middle" style="letter-spacing:.3px">40000</text>
<text class="tk" x="635.25" y="953.90" text-anchor="middle" style="letter-spacing:.3px">50000</text>
<text class="tk" x="719.48" y="953.90" text-anchor="middle" style="letter-spacing:.3px">60000</text>
<rect x="667.4" y="821.2" width="13.400" height="11" fill="#fff" stroke="#ccc" stroke-width="0.800"/>
<rect x="669.1" y="822.9000000000001" width="10" height="7.600" fill="#0000ff"/>
<text x="685.4" y="830.8000000000001" style="font-family:'DejaVu Serif','Liberation Serif',serif;font-size:10.670px;letter-spacing:.35px" fill="#8a8a8a">aida09 1.8.H</text>
<path d="M766.6999999999999 804.2L776.4999999999999 814.0L766.6999999999999 823.8L756.9 814.0Z" fill="#ff0000"/>
<path d="M1250.63 813.7V939.6M1334.86 813.7V939.6M1419.09 813.7V939.6M1503.32 813.7V939.6M1587.55 813.7V939.6M1671.78 813.7V939.6M1166.4 908.12H1718.9M1166.4 876.65H1718.9M1166.4 845.18H1718.9" stroke="#d4d4d4" stroke-width="0.800" fill="none"/>
<rect x="1166.4" y="813.7" width="552.5" height="125.89999999999998" fill="none" stroke="#000000" stroke-width="1.700"/>
<path d="M1166.40 939.60H1368.23V927.01H1368.82V939.60H1369.77V927.01H1370.36V939.60H1372.19V927.01H1372.78V939.60H1384.13V927.01H1384.72V939.60H1390.64V927.01H1391.23V939.60H1399.37V927.01H1399.96V939.60H1400.44V927.01H1401.03V939.60H1401.48V927.01H1402.01V939.60H1402.42V927.01H1402.95V939.60H1403.36V927.01H1404.13V939.60H1404.72V927.01H1405.50V939.60H1405.77V927.01H1406.31V939.60H1406.58V927.01H1407.11V939.60H1407.49V927.01H1408.08V939.60H1408.83V927.01H1409.42V939.60H1410.58V927.01H1411.17V939.60H1412.89V927.01H1413.40V914.42H1413.99V939.60H1414.63V927.01H1424.07V914.42H1424.66V927.01H1426.21V914.42H1426.81V927.01H1427.29V914.42H1427.88V927.01H1428.32V914.42H1429.23V927.01H1429.83V914.42H1430.74V927.01H1431.01V914.42H1431.54V927.01H1431.92V914.42H1432.51V927.01H1433.66V901.83H1434.26V927.01H1435.28V914.42H1435.87V927.01H1436.64V914.42H1437.56V901.83H1438.15V914.42H1438.66V939.60H1718.90" stroke="#2a2aff" stroke-width="0.800" fill="none" stroke-linejoin="miter"/>
<text class="tk" x="1161.6000000000001" y="943.60" text-anchor="end" style="letter-spacing:.1px">0.0</text>
<text class="tk" x="1161.6000000000001" y="912.12" text-anchor="end" style="letter-spacing:.1px">2.5</text>
<text class="tk" x="1161.6000000000001" y="880.65" text-anchor="end" style="letter-spacing:.1px">5.0</text>
<text class="tk" x="1161.6000000000001" y="849.18" text-anchor="end" style="letter-spacing:.1px">7.5</text>
<text class="tk" x="1161.6000000000001" y="817.70" text-anchor="end" style="letter-spacing:.1px">10.0</text>
<text class="tk" x="1166.10" y="953.90" text-anchor="middle" style="letter-spacing:.3px">0</text>
<text class="tk" x="1250.33" y="953.90" text-anchor="middle" style="letter-spacing:.3px">10000</text>
<text class="tk" x="1334.56" y="953.90" text-anchor="middle" style="letter-spacing:.3px">20000</text>
<text class="tk" x="1418.79" y="953.90" text-anchor="middle" style="letter-spacing:.3px">30000</text>
<text class="tk" x="1503.02" y="953.90" text-anchor="middle" style="letter-spacing:.3px">40000</text>
<text class="tk" x="1587.25" y="953.90" text-anchor="middle" style="letter-spacing:.3px">50000</text>
<text class="tk" x="1671.48" y="953.90" text-anchor="middle" style="letter-spacing:.3px">60000</text>
<rect x="1619.4" y="821.2" width="13.400" height="11" fill="#fff" stroke="#ccc" stroke-width="0.800"/>
<rect x="1621.1000000000001" y="822.9000000000001" width="10" height="7.600" fill="#0000ff"/>
<text x="1637.4" y="830.8000000000001" style="font-family:'DejaVu Serif','Liberation Serif',serif;font-size:10.670px;letter-spacing:.35px" fill="#111">aida11 1.8.H</text>
<path d="M1718.7 804.2L1728.5 814.0L1718.7 823.8L1708.9 814.0Z" fill="#00ff00"/>
</svg>
<svg class="abs" style="left:0;top:385px" width="600" height="40" viewBox="0 385 600 40">
<defs>
<linearGradient id="gY" x1="0" y1="0" x2="0" y2="1"><stop offset="0" stop-color="#ffd21a"/><stop offset="1" stop-color="#f2b800"/></linearGradient>
<radialGradient id="gB" cx="0.45" cy="0.45" r="0.6"><stop offset="0" stop-color="#25aef5"/><stop offset="0.800" stop-color="#1b93e6"/><stop offset="1" stop-color="#0a66b8"/></radialGradient>
<linearGradient id="gR" x1="0" y1="0" x2="0" y2="1"><stop offset="0" stop-color="#9fd0f5"/><stop offset="0.500" stop-color="#3d94e2"/><stop offset="1" stop-color="#0f62c8"/></linearGradient>
<linearGradient id="gGh" x1="0" y1="0" x2="1" y2="0"><stop offset="0" stop-color="#6fb000"/><stop offset="0.450" stop-color="#94c41a"/><stop offset="1" stop-color="#d8e97a"/></linearGradient>
<linearGradient id="gGr" x1="0" y1="0" x2="0" y2="1"><stop offset="0" stop-color="#d9ee9a"/><stop offset="0.480" stop-color="#b6da48"/><stop offset="0.520" stop-color="#84bd00"/><stop offset="1" stop-color="#7ab500"/></linearGradient>
<linearGradient id="gGu" x1="0" y1="0" x2="0" y2="1"><stop offset="0" stop-color="#cfe672"/><stop offset="0.550" stop-color="#a6cf3a"/><stop offset="0.620" stop-color="#78b400"/><stop offset="1" stop-color="#6aaa00"/></linearGradient>
<linearGradient id="gGd" x1="0" y1="0" x2="1" y2="0"><stop offset="0" stop-color="#cfe88a"/><stop offset="0.480" stop-color="#c0df66"/><stop offset="0.520" stop-color="#84bd00"/><stop offset="1" stop-color="#7ab500"/></linearGradient>
<radialGradient id="gL" cx="0.45" cy="0.6" r="0.6"><stop offset="0" stop-color="#ffffff"/><stop offset="0.700" stop-color="#ececec"/><stop offset="1" stop-color="#d6d6d6"/></radialGradient>
<linearGradient id="gP" x1="0" y1="0" x2="0" y2="1"><stop offset="0" stop-color="#7ea808"/><stop offset="0.500" stop-color="#d9e640"/><stop offset="1" stop-color="#7ea808"/></linearGradient>
<linearGradient id="gM" x1="0" y1="0" x2="0" y2="1"><stop offset="0" stop-color="#c40c0c"/><stop offset="0.500" stop-color="#ee5a5a"/><stop offset="1" stop-color="#c40c0c"/></linearGradient>
</defs>
<ellipse cx="19" cy="416.3" rx="8" ry="1.300" fill="rgba(90,60,20,.28)"/>
<circle cx="19" cy="405.7" r="10.6" fill="#f6c000"/>
<path d="M19 405.7L29.60 405.70A10.6 10.6 0 0 0 24.30 396.52Z" fill="#15130e"/>
<path d="M19 405.7L13.70 396.52A10.6 10.6 0 0 0 8.40 405.70Z" fill="#15130e"/>
<path d="M19 405.7L13.70 414.88A10.6 10.6 0 0 0 24.30 414.88Z" fill="#15130e"/>
<path d="M19 405.7L24.30 396.52A10.6 10.6 0 0 0 13.70 396.52Z" fill="#ffd000"/>
<path d="M8.4 407.09999999999997H29.6" stroke="#ffd21a" stroke-width="1"/>
<circle cx="19" cy="405.7" r="10.299999999999999" fill="none" stroke="rgba(60,40,0,.55)" stroke-width="0.700"/>
<path d="M10.5 400.09999999999997A10.2 10.2 0 0 1 27.5 400.09999999999997" fill="none" stroke="rgba(255,255,255,.55)" stroke-width="0.900"/>
<ellipse cx="76" cy="415.300" rx="9" ry="1.100" fill="rgba(90,60,20,.25)"/>
<path d="M75 394.700L66.600 395.400L68.800 397.900C65.200 402 64.900 409 71 414.800L74.200 411.600C70.500 407.600 70.400 403.600 72.300 401.300L74.600 403.800Z" fill="url(#gR)" stroke="#1767c8" stroke-width="0.700" stroke-linejoin="round"/>
<path d="M77.200 415.300L85.600 414.600L83.400 412.100C87 408 87.300 401 81.200 395.600L78.400 398.500C81.700 402.400 81.800 406.400 79.900 408.700L77.600 406.200Z" fill="url(#gR)" stroke="#1767c8" stroke-width="0.700" stroke-linejoin="round"/>
<ellipse cx="165.6" cy="415.300" rx="8" ry="1.100" fill="rgba(90,60,20,.25)"/>
<path d="M165.79999999999998 406.40000000000003L174.0 414.2" stroke="#0d0d0d" stroke-width="3.400" stroke-linecap="round"/>
<path d="M166.4 405.40000000000003L173.79999999999998 412.6" stroke="#f4f4f4" stroke-width="0.900" stroke-linecap="round"/>
<circle cx="160.6" cy="400.8" r="6.400" fill="url(#gL)" stroke="#c4c4c4" stroke-width="1.900"/>
<circle cx="160.6" cy="400.8" r="7.350" fill="none" stroke="#a9a9a9" stroke-width="0.500"/>
<path d="M165.2 396.79999999999995H169.1V392.9H172.29999999999998V396.79999999999995H176.2V400.0H172.29999999999998V403.9H169.1V400.0H165.2Z" fill="#d3e23a" stroke="#7da30a" stroke-width="0.900" stroke-linejoin="round"/>
<ellipse cx="223.4" cy="415.300" rx="8" ry="1.100" fill="rgba(90,60,20,.25)"/>
<path d="M223.6 406.40000000000003L231.8 414.2" stroke="#0d0d0d" stroke-width="3.400" stroke-linecap="round"/>
<path d="M224.20000000000002 405.40000000000003L231.6 412.6" stroke="#f4f4f4" stroke-width="0.900" stroke-linecap="round"/>
<circle cx="218.4" cy="400.8" r="6.400" fill="url(#gL)" stroke="#c4c4c4" stroke-width="1.900"/>
<circle cx="218.4" cy="400.8" r="7.350" fill="none" stroke="#a9a9a9" stroke-width="0.500"/>
<rect x="222.400" y="396.800" width="11.300" height="3.200" rx="1.200" fill="url(#gM)" stroke="#b80a0a" stroke-width="0.500"/>
<ellipse cx="268.7" cy="404.9" rx="1.200" ry="7" fill="rgba(90,60,20,.22)"/>
<circle cx="278.5" cy="404.9" r="10.100" fill="url(#gB)" stroke="#0d64b6" stroke-width="0.700"/>
<circle cx="278.5" cy="404.9" r="8.800" fill="none" stroke="rgba(160,225,255,.55)" stroke-width="0.700"/>
<path d="M275.4 399.09999999999997H281.6L278.5 405.09999999999997ZM275.4 405.09999999999997H281.6L278.5 411.09999999999997Z" fill="#3b3b3b"/>
<ellipse cx="347.7" cy="404.9" rx="1.200" ry="7" fill="rgba(90,60,20,.22)"/>
<circle cx="337.9" cy="404.9" r="10.100" fill="url(#gB)" stroke="#0d64b6" stroke-width="0.700"/>
<circle cx="337.9" cy="404.9" r="8.800" fill="none" stroke="rgba(160,225,255,.55)" stroke-width="0.700"/>
<path d="M334.79999999999995 404.9H341.0L337.9 398.9ZM334.79999999999995 410.79999999999995H341.0L337.9 404.79999999999995Z" fill="#3b3b3b"/>
<ellipse cx="383.200" cy="405.400" rx="1.100" ry="8" fill="rgba(70,50,20,.3)"/>
<path d="M383.400 405.400L392.600 397.200V400.300H404V410.600H392.600V413.700Z" fill="url(#gGh)" stroke="#5c9c0c" stroke-width="0.900" stroke-linejoin="round"/>
<ellipse cx="452" cy="413.600" rx="11" ry="0.900" fill="rgba(70,50,20,.35)"/>
<path d="M463.600 403.900L452 395.200V399.300H440.200V408.700H452V412.600Z" fill="url(#gGr)" stroke="#5c9c0c" stroke-width="0.900" stroke-linejoin="round"/>
<ellipse cx="508.800" cy="415.700" rx="8" ry="0.900" fill="rgba(70,50,20,.35)"/>
<path d="M508.750 394.400L516.900 403H513.800V415.100H504.200V403H500.600Z" fill="url(#gGu)" stroke="#5c9c0c" stroke-width="0.900" stroke-linejoin="round"/>
<ellipse cx="574.300" cy="405" rx="1" ry="10" fill="rgba(70,50,20,.3)"/>
<path d="M565 417.500L556.300 405.500H560.300V393.300H569.800V405.500H573.700Z" fill="url(#gGd)" stroke="#5c9c0c" stroke-width="0.900" stroke-linejoin="round"/>
</svg>
<svg class="abs" style="left:1820px;top:156px" width="100" height="60" viewBox="1820 156 100 60">
<rect x="1825" y="160" width="51" height="51" fill="#f8c500"/>
<circle cx="1832.300" cy="165.300" r="4.600" fill="#15235c"/><path d="M1829.600 167L1832.300 163.200L1835 167Z" fill="#fff"/>
<path d="M1864.700 161.300H1870V165.500C1870 167.700 1868.800 169 1867.350 169.700C1865.900 169 1864.700 167.700 1864.700 165.500Z" fill="#1f3aa0"/><path d="M1865.800 162.300H1868.900V163.400H1865.800ZM1866.300 164.600H1868.400V166.800H1866.300Z" fill="#e8ecff"/>
<text x="1826.300" y="188.600" style="font-family:'DejaVu Serif','Liberation Serif',serif;font-weight:bold;font-size:23px" fill="#0a0a05" textLength="23" lengthAdjust="spacingAndGlyphs">M</text>
<text x="1848.800" y="186" style="font-family:'DejaVu Sans','Liberation Sans',sans-serif;font-weight:bold;font-size:10.500px" fill="#0a0a05" textLength="25.500" lengthAdjust="spacingAndGlyphs">idas</text>
<text x="1829" y="197" style="font-family:'DejaVu Sans','Liberation Sans',sans-serif;font-weight:bold;font-size:2.800px" fill="#1a1405" textLength="15" lengthAdjust="spacingAndGlyphs">powered by</text>
<rect x="1851" y="191.800" width="11.200" height="16.700" fill="#d83a10"/>
<path d="M1857.600 193.800C1855.600 196 1855.200 201 1856.200 204.800C1857.400 201.500 1858.400 197 1857.600 193.800Z" fill="#2a5ad0"/>
<path d="M1853 206.500H1860.300" stroke="#f0a040" stroke-width="0.900"/>
<path d="M1881.300 202.700L1883 170L1912.400 161.500L1912 170L1909.200 210.300L1881.300 208.300Z" fill="#0b4cc0"/>
<path d="M1883.200 161.200L1912 161.800L1911.600 202.800L1883 202.600Z" fill="#d13a02"/>
<path d="M1900.800 164.300C1903 165 1902.600 168 1901.400 171.500L1903.400 171C1901.800 178 1899.500 188 1897 195.200C1895.600 192 1893.400 186 1893.800 180C1894.200 172.500 1897.500 165.500 1900.800 164.300Z" fill="#1b55c8"/>
<path d="M1892.600 179C1892.200 184 1893.800 190 1895.600 193.200M1899.800 181C1899.600 186 1898.200 191 1897 194.500" stroke="#f2dfd0" stroke-width="0.600" fill="none"/>
<path d="M1889.500 163.200L1891.200 170.500M1892.200 162.800L1892.600 168M1905.800 170.200L1904.200 175.500M1908.800 170.800L1907.200 174.200" stroke="#f4a21a" stroke-width="0.900" fill="none"/>
<text x="1884" y="201.300" style="font-family:'DejaVu Sans','Liberation Sans',sans-serif;font-weight:bold;font-size:5.200px;letter-spacing:.6px" fill="#f6ece4">TCL</text>
<text x="1885.600" y="208.900" style="font-family:'DejaVu Sans','Liberation Sans',sans-serif;font-weight:bold;font-size:4.600px" fill="#f2e21a" textLength="22" lengthAdjust="spacingAndGlyphs">POWERED</text>
</svg>
</div>
</div>
</body>
</html>
